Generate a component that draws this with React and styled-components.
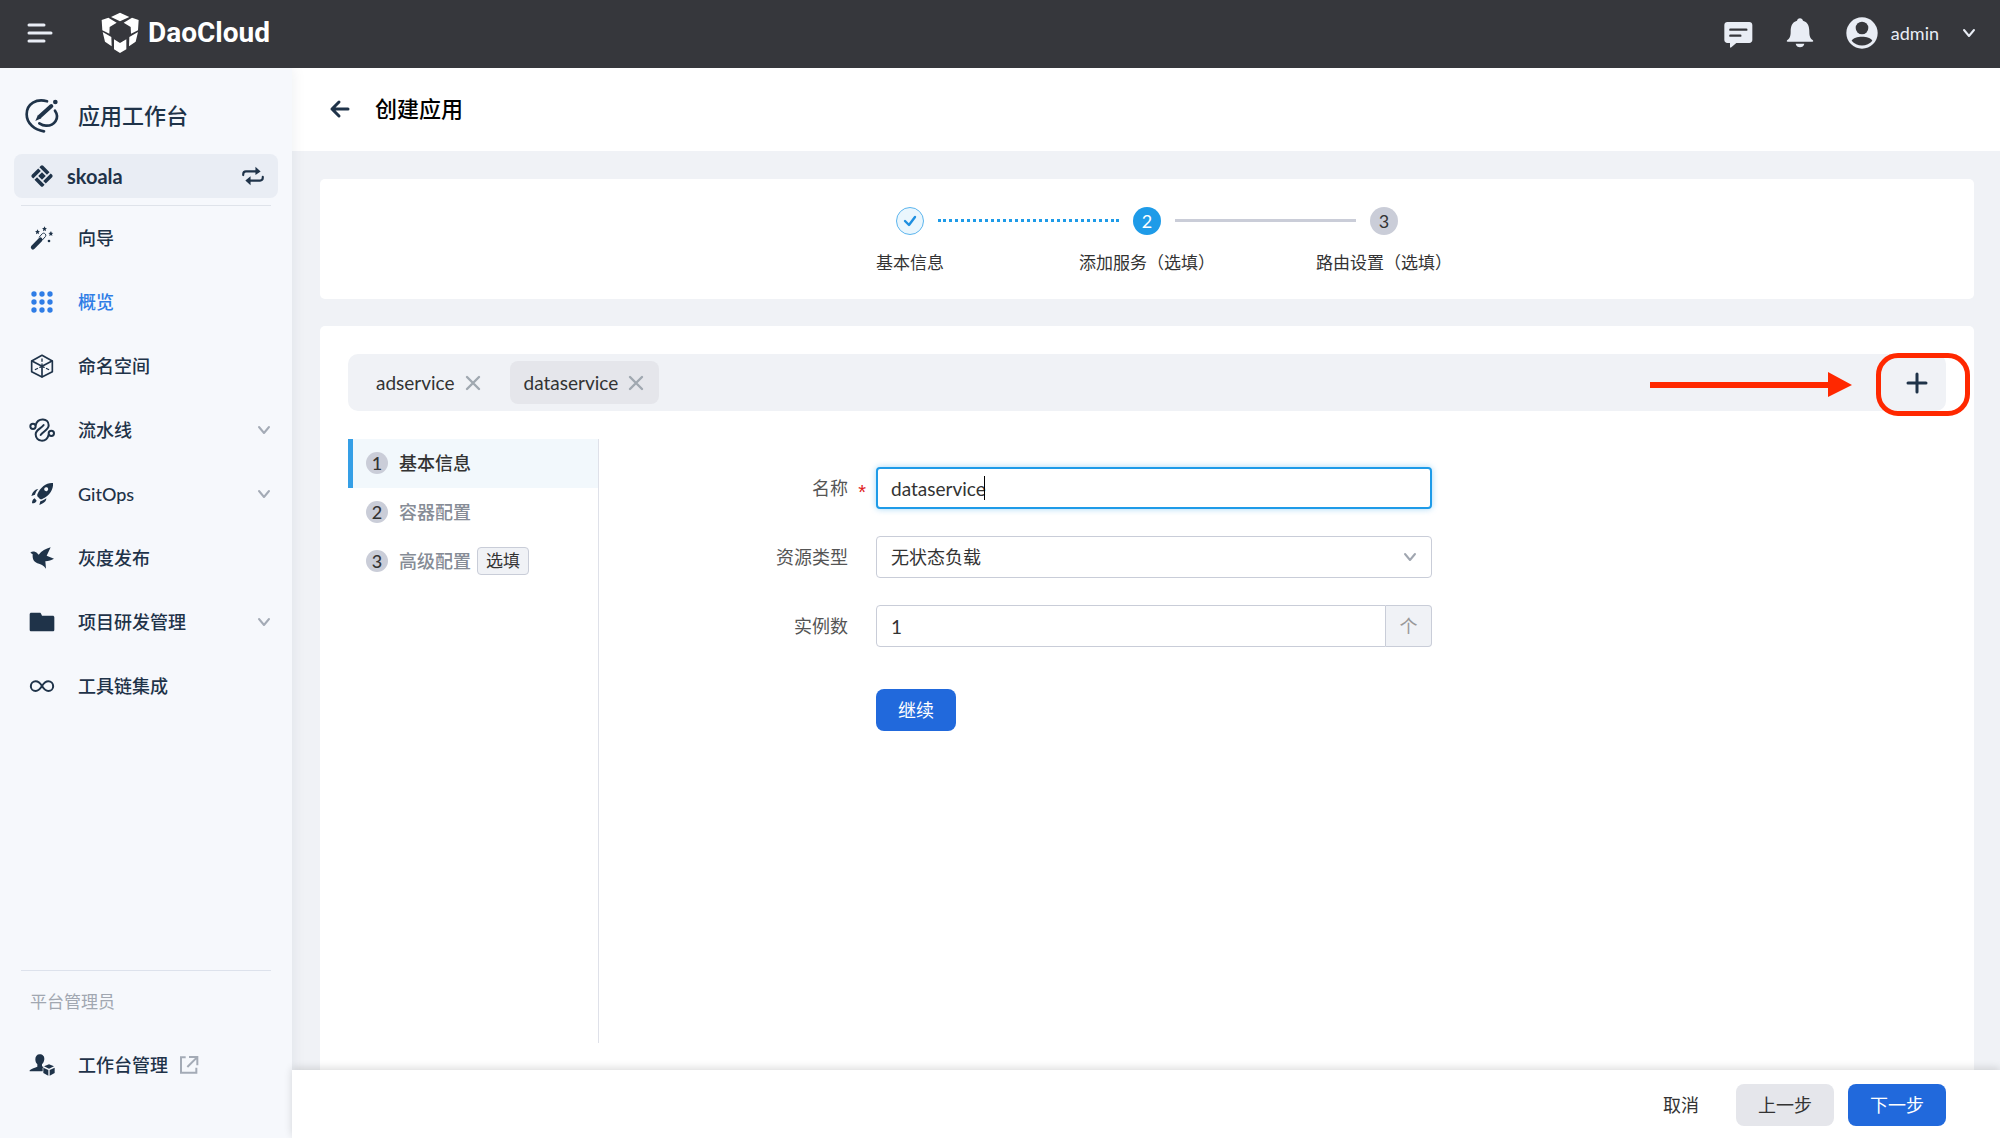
import React, { useState } from 'react';
import styled, { createGlobalStyle } from 'styled-components';

const menus = [
  { name: '向导', icon: 'wand' },
  { name: '概览', icon: 'grid', active: true },
  { name: '命名空间', icon: 'cube' },
  { name: '流水线', icon: 'pipeline', expandable: true },
  { name: 'GitOps', icon: 'rocket', expandable: true },
  { name: '灰度发布', icon: 'bird' },
  { name: '项目研发管理', icon: 'folder', expandable: true },
  { name: '工具链集成', icon: 'infinity' },
];

const sections = [
  { name: '基本信息', active: true },
  { name: '容器配置' },
  { name: '高级配置', tag: '选填' },
];

const line = {
  fill: 'none',
  stroke: 'currentColor',
  strokeLinecap: 'round',
  strokeLinejoin: 'round',
};

const glyphs = {
  wand: (
    <>
      <path {...line} strokeWidth="13" d="M9 64L31 41" />
      <path {...line} strokeWidth="3" d="M28 33l9-10c5-5 14 3 9 9l-9 10" />
      <path
        fill="currentColor"
        d="M23 10l2 5 5 1-4 3 1 6-4-3-5 3 1-6-4-3 5-1zM44 1l2 5 5 1-4 3 1 6-4-3-5 3 1-6-4-3 5-1zM63 15l2 5 5 1-4 3 1 6-4-3-5 3 1-6-4-3 5-1z"
      />
      <circle fill="currentColor" cx="57" cy="45" r="4" />
    </>
  ),
  grid: [12, 36, 60].map((y) =>
    [12, 36, 60].map((x) => (
      <circle key={`${x}-${y}`} fill="currentColor" cx={x} cy={y} r="8" />
    ))
  ),
  cube: (
    <g {...line} strokeWidth="5">
      <path d="M36 4l31 17v32L36 69 5 53V21z" />
      <path d="M36 68V37L6 21M36 37l30-16" />
      <path strokeWidth="4" strokeDasharray="7 8" d="M36 37V8M36 37L9 50M36 37l27 13" />
    </g>
  ),
  pipeline: (
    <g {...line} strokeWidth="6">
      <circle cx="9" cy="25" r="8" />
      <circle cx="64" cy="46" r="8" />
      <path d="M17 21C24-3 56 0 56 22c0 14-16 17-24 29" />
      <path d="M56 50C49 76 17 72 17 49c0-14 16-16 24-28" />
    </g>
  ),
  rocket: (
    <>
      <path
        fill="currentColor"
        fillRule="evenodd"
        d="M69 3C50 1 32 14 22 37c-1 4 0 7 3 9l4 4c3 2 6 2 9 0C58 41 71 23 69 3zM51 27a6 6 0 1 1 0-11 6 6 0 0 1 0 11z"
      />
      <path
        fill="currentColor"
        d="M25 21C15 22 8 29 4 42l11-4c2-7 5-12 10-17zM49 49c0 9-7 15-21 20l3-11c7-2 12-5 18-9zM14 49l6 7c-2 5-6 8-14 8 0-8 3-13 8-15z"
      />
    </>
  ),
  bird: (
    <path
      fill="currentColor"
      d="M1 20c5-5 14-5 20 1l5 5C35 14 47 8 62 4l-12 25 22 9c-8 5-16 7-26 8l2 22C41 58 32 55 22 52 11 47 7 40 8 25z"
    />
  ),
  folder: (
    <path
      fill="currentColor"
      d="M4 8h25c3 0 4 2 5 5l2 4h32c3 0 5 2 5 5v37c0 3-2 5-5 5H4c-3 0-5-2-5-5V13c0-3 2-5 5-5z"
    />
  ),
  infinity: (
    <path
      {...line}
      strokeWidth="6"
      d="M36 36C29 25 23 22 17 22a14 14 0 0 0 0 29c7 0 12-4 19-15s12-14 19-14a14 14 0 0 1 0 29c-7 0-12-4-19-15z"
    />
  ),
  manager: (
    <>
      <path
        fill="currentColor"
        d="M29 4c9 0 15 6 14 15-1 7-3 11-7 15v6l5 2-3 3v10H-1v-3c5-6 17-7 23-11v-7c-4-4-6-8-6-15 0-9 5-15 13-15z"
      />
      <path fill="currentColor" d="M57 34l15 6-15 7-15-7zM40 44l15 7v17l-15-8zM74 44v16l-15 8V51z" />
    </>
  ),
  diamond: (
    <g fill="currentColor" transform="translate(36 36) rotate(45)">
      <rect x="-8" y="-8" width="16" height="16" rx="1" />
      <path d="M-19-24H8v11h-32v-6q0-5 5-5z" />
      <path d="M24-19V8H13v-32h6q5 0 5 5z" />
      <path d="M19 24H-8V13h32v6q0 5-5 5z" />
      <path d="M-24 19V-8h11v32h-6q-5 0-5-5z" />
    </g>
  ),
  swap: (
    <>
      <path {...line} strokeWidth="7" d="M4 33v-3c0-6 3-9 9-9h36M68 39v3c0 6-3 9-9 9H23" />
      <path fill="currentColor" d="M44 6l17 15-17 12zM28 37v29L11 51z" />
    </>
  ),
  external: (
    <g {...line} strokeLinecap="butt" strokeLinejoin="miter" strokeWidth="6">
      <path d="M26 13H12v46h46V44" />
      <path d="M36 12h25v25M60 13L31 42" />
    </g>
  ),
};

const Icon = ({ name, size = 24 }) => (
  <Svg width={size} height={size} viewBox="0 0 72 72" aria-hidden="true">
    {glyphs[name]}
  </Svg>
);

const Chevron = () => (
  <Svg width="14" height="14" viewBox="0 0 14 14" aria-hidden="true">
    <path {...line} strokeWidth="2" d="M2 4l5 6 5-6" />
  </Svg>
);

const Close = () => (
  <Svg width="14" height="14" viewBox="0 0 14 14" aria-hidden="true">
    <path {...line} strokeWidth="2.4" d="M1 1l12 12M13 1L1 13" />
  </Svg>
);

const LogoMark = () => (
  <Svg width="38" height="42" viewBox="304 36 114 126" aria-hidden="true">
    <path
      fill="#fff"
      d="M334 51l27-13 28 13-28 13zM306 60l20-7 25 15-21 13-1 20-21-10zM417 60l-20-7-25 15 21 13 1 20 21-10zM309 96l26 15 1 28-20-14zM415 96l-26 15-1 28 20-14zM343 118l18 11 19-11v30l-19 11-18-11z"
    />
  </Svg>
);

const WorkbenchMark = () => (
  <Svg width="34" height="34" viewBox="75 298 102 102" aria-hidden="true">
    <g {...line} strokeWidth="8">
      <path d="M141 305c-31-9-61 7-61 39 0 28 24 47 52 51" />
      <path d="M165 333c16 23-3 46-27 45-8 0-14-3-20-7" />
      <path strokeWidth="12" d="M120 350l34-31" />
    </g>
    <path fill="currentColor" d="M114 345l10 11-18 8z" />
    <circle fill="currentColor" cx="166" cy="307" r="7" />
  </Svg>
);

const App = () => {
  const [tabs, setTabs] = useState(['adservice', 'dataservice']);
  const [name, setName] = useState('dataservice');
  const [count, setCount] = useState('1');

  return (
    <>
      <GlobalStyle />
      <Page>
        <TopBar>
          <IconButton aria-label="菜单">
            <Svg width="26" height="22" viewBox="0 0 26 22">
              <path {...line} strokeWidth="3" d="M2 3h15M2 11h22M2 19h15" />
            </Svg>
          </IconButton>
          <Logo href="#">
            <LogoMark />
            DaoCloud
          </Logo>
          <TopActions>
            <IconButton aria-label="消息">
              <Svg width="30" height="30" viewBox="0 0 90 90">
                <path
                  fill="currentColor"
                  d="M10 12h66c5 0 9 4 9 9v45c0 5-4 9-9 9H37L22 88c-2 2-4 1-4-2V75h-8c-5 0-9-4-9-9V21c0-5 4-9 9-9z"
                />
                <path fill="none" stroke="#36373c" strokeLinecap="round" strokeWidth="7" d="M19 35h48M19 53h30" />
              </Svg>
            </IconButton>
            <IconButton aria-label="通知">
              <Svg width="26" height="30" viewBox="0 0 78 90">
                <path
                  fill="currentColor"
                  d="M39 1c5 0 8 3 9 7 15 4 19 17 19 33 0 14 3 20 10 25 3 3 2 5-1 5H2c-3 0-4-2-1-5 7-5 10-11 10-25C11 25 15 12 30 8c1-4 4-7 9-7zM26 77h26c-2 14-24 14-26 0z"
                />
              </Svg>
            </IconButton>
            <UserButton>
              <Svg width="32" height="32" viewBox="0 0 96 96" aria-hidden="true">
                <circle fill="currentColor" cx="48" cy="48" r="47" />
                <circle fill="#36373c" cx="48" cy="33" r="19" />
                <path fill="#36373c" d="M17 71c8-16 54-16 62 0-14 19-48 19-62 0z" />
              </Svg>
              <span>admin</span>
              <Chevron />
            </UserButton>
          </TopActions>
        </TopBar>

        <Body>
          <Sidebar>
            <SidebarTitle>
              <WorkbenchMark />
              应用工作台
            </SidebarTitle>
            <Workspace>
              <Icon name="diamond" />
              <span>skoala</span>
              <Icon name="swap" size={22} />
            </Workspace>
            <Menu>
              {menus.map(({ name, icon, active, expandable }) => (
                <MenuItem href="#" key={name} $active={active}>
                  <Icon name={icon} />
                  <span>{name}</span>
                  {expandable && (
                    <Expand>
                      <Chevron />
                    </Expand>
                  )}
                </MenuItem>
              ))}
            </Menu>
            <AdminMenu>
              <MenuCaption>平台管理员</MenuCaption>
              <MenuItem href="#">
                <Icon name="manager" />
                <span>工作台管理</span>
                <External>
                  <Icon name="external" />
                </External>
              </MenuItem>
            </AdminMenu>
          </Sidebar>

          <Main>
            <TitleBar>
              <IconButton aria-label="返回">
                <Svg width="20" height="18" viewBox="0 0 20 18">
                  <path {...line} strokeWidth="3" d="M18 9H2M9 2L2 9l7 7" />
                </Svg>
              </IconButton>
              <PageTitle>创建应用</PageTitle>
            </TitleBar>

            <Content>
              <StepCard>
                <Step>
                  <StepDot $state="done">
                    <Svg width="14" height="12" viewBox="0 0 14 12" aria-hidden="true">
                      <path {...line} strokeWidth="2.4" d="M2 6l4 4 6-8" />
                    </Svg>
                  </StepDot>
                  <StepName>基本信息</StepName>
                </Step>
                <Connector $done aria-hidden="true" />
                <Step>
                  <StepDot $state="current">2</StepDot>
                  <StepName>添加服务（选填）</StepName>
                </Step>
                <Connector aria-hidden="true" />
                <Step>
                  <StepDot>3</StepDot>
                  <StepName>路由设置（选填）</StepName>
                </Step>
              </StepCard>

              <ServiceCard>
                <TabBar>
                  {tabs.map((tab) => (
                    <Tab key={tab} $active={tab === 'dataservice'}>
                      <TabName>{tab}</TabName>
                      <CloseButton
                        aria-label={`关闭 ${tab}`}
                        onClick={() => setTabs(tabs.filter((item) => item !== tab))}
                      >
                        <Close />
                      </CloseButton>
                    </Tab>
                  ))}
                  <AddButton aria-label="添加服务">
                    <Svg width="22" height="22" viewBox="0 0 22 22">
                      <path {...line} strokeWidth="3" d="M11 2v18M2 11h18" />
                    </Svg>
                  </AddButton>
                  <Arrow width="202" height="26" viewBox="0 0 202 26" aria-hidden="true">
                    <path fill="#ff2800" d="M0 10h178V0l24 13-24 12V16H0z" />
                  </Arrow>
                  <Highlight />
                </TabBar>

                <Panel>
                  <SectionNav>
                    {sections.map(({ name, active, tag }, i) => (
                      <SectionItem key={name} $active={active}>
                        <SectionNumber>{i + 1}</SectionNumber>
                        <span>{name}</span>
                        {tag && <Tag>{tag}</Tag>}
                      </SectionItem>
                    ))}
                  </SectionNav>

                  <Form onSubmit={(e) => e.preventDefault()}>
                    <Label htmlFor="name" $required>
                      名称
                    </Label>
                    <Field>
                      <Input
                        id="name"
                        autoFocus
                        value={name}
                        onChange={(e) => setName(e.target.value)}
                      />
                      {name === 'dataservice' && <Caret />}
                    </Field>
                    <Label htmlFor="kind">资源类型</Label>
                    <Field>
                      <Select id="kind">
                        <option>无状态负载</option>
                      </Select>
                      <SelectArrow>
                        <Chevron />
                      </SelectArrow>
                    </Field>
                    <Label htmlFor="count">实例数</Label>
                    <Field>
                      <GroupInput
                        id="count"
                        value={count}
                        onChange={(e) => setCount(e.target.value)}
                      />
                      <Unit>个</Unit>
                    </Field>
                    <ContinueButton $primary>继续</ContinueButton>
                  </Form>
                </Panel>
              </ServiceCard>
            </Content>

            <Footer>
              <TextButton>取消</TextButton>
              <Button>上一步</Button>
              <Button $primary>下一步</Button>
            </Footer>
          </Main>
        </Body>
      </Page>
    </>
  );
};

export default App;

const GlobalStyle = createGlobalStyle`
  * {
    box-sizing: border-box;
  }

  body {
    margin: 0;
    color: #333;
    font-family: Lato, 'Noto Sans CJK SC', sans-serif;
    font-size: 18px;
    line-height: 24px;
  }

  button, input, select {
    font: inherit;
    color: inherit;
  }

  button {
    padding: 0;
    border: none;
    background: none;
    cursor: pointer;
  }

  a {
    color: inherit;
    text-decoration: none;
  }
`;

const Svg = styled.svg`
  display: block;
  flex-shrink: 0;
  overflow: visible;
`;

const Page = styled.div`
  display: flex;
  flex-direction: column;
  min-height: 100vh;
`;

const TopBar = styled.header`
  display: flex;
  align-items: center;
  height: 68px;
  padding: 0 24px 2px 27px;
  background: #36373c;
  color: #e9edf5;
`;

const IconButton = styled.button`
  display: flex;
`;

const Logo = styled.a`
  display: flex;
  align-items: center;
  gap: 9px;
  margin-left: 48px;
  color: #fff;
  font-family: Roboto, sans-serif;
  font-size: 28px;
  font-weight: bold;
`;

const TopActions = styled.div`
  display: flex;
  align-items: center;
  gap: 33px;
  margin-left: auto;
`;

const UserButton = styled.button`
  display: flex;
  align-items: center;

  span {
    margin: 0 23px 0 13px;
  }
`;

const Body = styled.div`
  display: flex;
  flex: 1;
`;

const Sidebar = styled.aside`
  z-index: 1;
  display: flex;
  flex-direction: column;
  flex-shrink: 0;
  width: 292px;
  padding: 24px 14px 41px;
  background: #f6f8fc;
  box-shadow: 0 0 14px rgba(30, 40, 60, 0.08);
  clip-path: inset(0 -20px 0 0);
  color: #1f3349;
`;

const SidebarTitle = styled.div`
  display: flex;
  align-items: center;
  gap: 19px;
  height: 48px;
  padding-left: 11px;
  font-size: 22px;
  font-weight: 500;
`;

const Workspace = styled.button`
  display: flex;
  align-items: center;
  height: 44px;
  margin-top: 14px;
  padding: 0 14px 0 16px;
  border-radius: 8px;
  background: #e9edf4;
  font-size: 20px;
  font-weight: bold;

  span {
    flex: 1;
    margin-left: 13px;
    text-align: left;
  }
`;

const Menu = styled.nav`
  margin: 7px 7px 0;
  border-top: 1px solid #dfe3ea;
`;

const MenuItem = styled.a`
  display: flex;
  align-items: center;
  height: 64px;
  padding-left: 9px;
  color: ${({ $active }) => ($active ? '#2f7de6' : '#1f3349')};
  font-weight: 500;

  span {
    margin-left: 24px;
  }
`;

const Expand = styled.div`
  margin-left: auto;
  color: #a4abb6;
`;

const External = styled.div`
  margin-left: 9px;
  color: #a4abb6;
`;

const AdminMenu = styled.nav`
  margin: auto 7px 0;
  border-top: 1px solid #dde2ec;
`;

const MenuCaption = styled.div`
  padding: 19px 9px;
  color: #a1a7b1;
  font-size: 17px;
`;

const Main = styled.main`
  display: flex;
  flex: 1;
  flex-direction: column;
  min-width: 0;
  background: #f0f2f6;
`;

const TitleBar = styled.div`
  display: flex;
  align-items: center;
  gap: 25px;
  height: 83px;
  padding: 0 0 2px 38px;
  background: #fff;
  color: #1f3349;
`;

const PageTitle = styled.h1`
  margin: 0;
  color: #000;
  font-size: 22px;
  font-weight: 500;
`;

const Content = styled.div`
  display: flex;
  flex: 1;
  flex-direction: column;
  gap: 27px;
  padding: 28px 26px 0 28px;
`;

const StepCard = styled.ol`
  display: flex;
  justify-content: center;
  margin: 0;
  padding: 28px 28px 24px;
  border-radius: 5px;
  background: #fff;
  list-style: none;
`;

const Step = styled.li`
  display: flex;
  flex-direction: column;
  align-items: center;
  gap: 16px;
  width: 28px;
`;

const StepDot = styled.div`
  display: flex;
  align-items: center;
  justify-content: center;
  width: 28px;
  height: 28px;
  border: 1px solid ${({ $state }) => ($state === 'done' ? '#5cb5ee' : 'transparent')};
  border-radius: 50%;
  background: ${({ $state }) =>
    ({ done: '#eaf6fd', current: '#1e9be8' })[$state] || '#cacdd8'};
  background-clip: border-box;
  color: ${({ $state }) => ({ done: '#1e8fe0', current: '#fff' })[$state] || '#333'};
`;

const StepName = styled.div`
  font-size: 17px;
  white-space: nowrap;
`;

const Connector = styled.li`
  width: 181px;
  height: 3px;
  margin: 12px 14px 0;
  border-top: 3px ${({ $done }) => ($done ? 'dotted #1e9be8' : 'solid #cacdd8')};
`;

const ServiceCard = styled.section`
  display: flex;
  flex: 1;
  flex-direction: column;
  gap: 28px;
  padding: 28px 28px 27px;
  border-radius: 5px 5px 0 0;
  background: #fff;
`;

const TabBar = styled.div`
  position: relative;
  display: flex;
  align-items: center;
  gap: 14px;
  height: 57px;
  padding: 0 14px;
  border-radius: 10px;
  background: #f0f2f6;
`;

const Tab = styled.div`
  display: flex;
  align-items: center;
  gap: 11px;
  height: 43px;
  padding: 0 16px 0 14px;
  border-radius: 8px;
  background: ${({ $active }) => ($active ? '#e5e6eb' : 'transparent')};
`;

const TabName = styled.button`
  font-size: 19px;
`;

const CloseButton = styled.button`
  color: #a0a8b0;
`;

const AddButton = styled.button`
  margin-left: auto;
  padding: 4px;
  color: #1f3349;
`;

// callout drawn over the add button
const Arrow = styled(Svg)`
  position: absolute;
  top: 18px;
  right: 94px;
`;

const Highlight = styled.div`
  position: absolute;
  top: -1px;
  right: -24px;
  width: 94px;
  height: 63px;
  border: 5px solid #ff2800;
  border-radius: 22px;
  pointer-events: none;
`;

const Panel = styled.div`
  display: flex;
  flex: 1;
`;

const SectionNav = styled.nav`
  flex-shrink: 0;
  width: 251px;
  border-right: 1px solid #dfe1e9;
`;

const SectionItem = styled.button`
  display: flex;
  align-items: center;
  width: 100%;
  height: 49px;
  padding: 0 0 1px 13px;
  border-left: 5px solid ${({ $active }) => ($active ? '#359fe6' : 'transparent')};
  background: ${({ $active }) => ($active ? '#f2f8fc' : 'transparent')};
  color: ${({ $active }) => ($active ? '#333' : '#868c96')};
  font-weight: 500;
`;

const SectionNumber = styled.div`
  display: flex;
  align-items: center;
  justify-content: center;
  width: 22px;
  height: 22px;
  margin-right: 11px;
  border-radius: 50%;
  background: #cacdd8;
  color: #333;
`;

const Tag = styled.span`
  margin-left: 6px;
  padding: 1px 8px;
  border: 1px solid #c9cdd8;
  border-radius: 4px;
  background: #f0f2f6;
  color: #333;
  font-size: 17px;
  font-weight: 400;
`;

const Form = styled.form`
  display: grid;
  flex: 1;
  grid-template-columns: 249px minmax(0, 556px);
  align-content: start;
  align-items: center;
  gap: 27px 28px;
  padding-top: 28px;
`;

const Label = styled.label`
  position: relative;
  color: #555;
  text-align: right;

  &::after {
    content: ${({ $required }) => ($required ? "'*'" : 'none')};
    position: absolute;
    top: 4px;
    right: -18px;
    color: #e02020;
    font-family: 'Liberation Sans', sans-serif;
    font-size: 20px;
  }
`;

const Field = styled.div`
  position: relative;
  display: flex;
`;

const Input = styled.input`
  flex: 1;
  min-width: 0;
  height: 42px;
  padding: 0 14px;
  border: 1px solid #c9cdd8;
  border-radius: 4px;
  background: #fff;
  font-size: 19px;
  outline: none;
  caret-color: transparent;

  &:focus {
    border: 2px solid #1e9be8;
    padding: 0 13px;
    box-shadow: 0 0 6px rgba(30, 155, 232, 0.4);
  }
`;

const Caret = styled.span`
  position: absolute;
  top: 9px;
  left: 108px;
  width: 1px;
  height: 24px;
  background: #000;
`;

const Select = styled(Input).attrs({ as: 'select' })`
  appearance: none;
  font-size: 18px;
`;

const SelectArrow = styled.div`
  position: absolute;
  top: 14px;
  right: 15px;
  color: #a0a6b0;
  pointer-events: none;
`;

const GroupInput = styled(Input)`
  border-radius: 4px 0 0 4px;
`;

const Unit = styled.div`
  display: flex;
  align-items: center;
  justify-content: center;
  width: 46px;
  border: 1px solid #c9cdd8;
  border-left: none;
  border-radius: 0 4px 4px 0;
  background: #f0f2f6;
  color: #999;
`;

const Button = styled.button`
  height: 42px;
  padding: 0 22px;
  border-radius: 8px;
  background: ${({ $primary }) => ($primary ? '#2169dc' : '#e5e6eb')};
  color: ${({ $primary }) => ($primary ? '#fff' : '#333')};
`;

const ContinueButton = styled(Button)`
  grid-column: 2;
  justify-self: start;
  margin-top: 15px;
`;

const TextButton = styled.button`
  margin-right: 23px;
`;

const Footer = styled.footer`
  z-index: 1;
  display: flex;
  align-items: center;
  justify-content: flex-end;
  gap: 14px;
  height: 68px;
  padding: 2px 54px 0;
  background: #fff;
  box-shadow: 0 -2px 8px rgba(0, 0, 0, 0.14);
`;
